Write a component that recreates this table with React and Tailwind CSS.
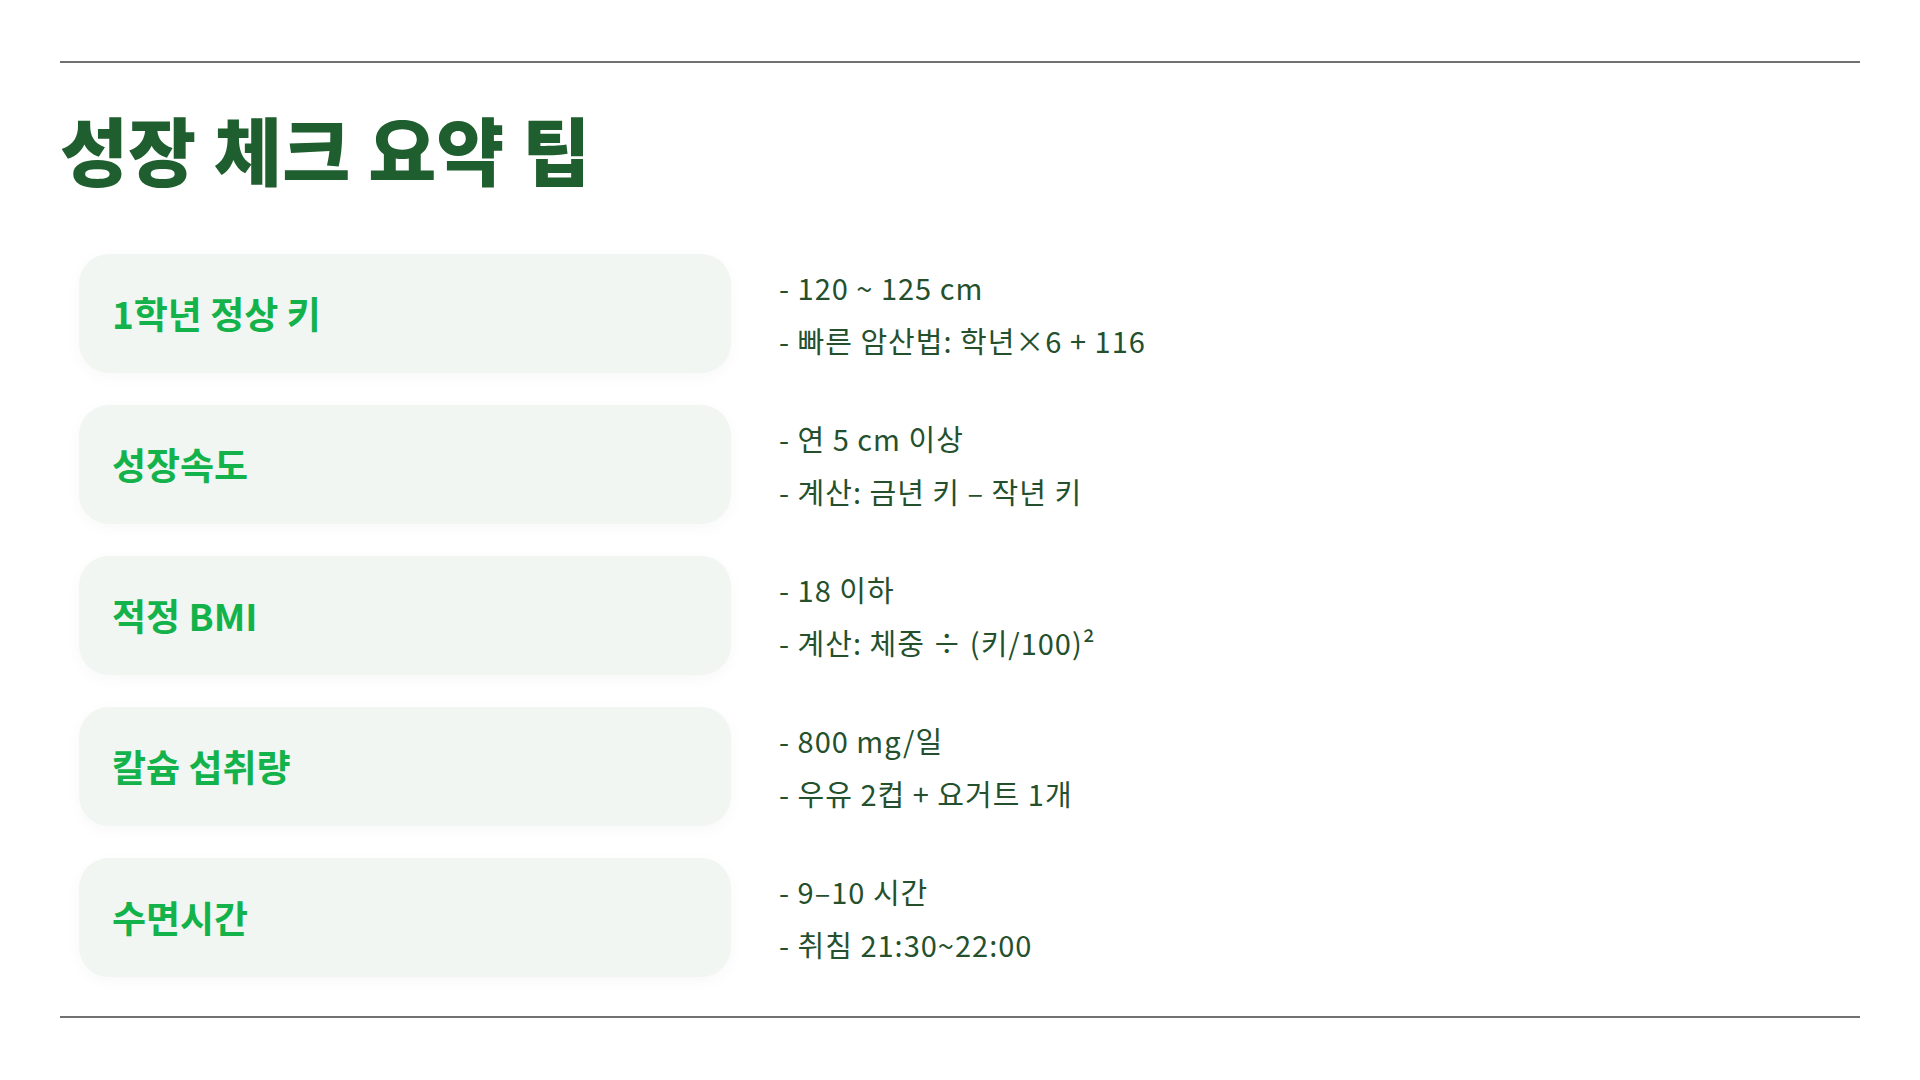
import React from "react";

// --- SUMMARY DATA ---
const TIPS = [
  { label: "1학년 정상 키", lines: ["- 120 ~ 125 cm", "- 빠른 암산법: 학년×6 + 116"] },
  { label: "성장속도", lines: ["- 연 5 cm 이상", "- 계산: 금년 키 – 작년 키"] },
  { label: "적정 BMI", lines: ["- 18 이하", "- 계산: 체중 ÷ (키/100)²"] },
  { label: "칼슘 섭취량", lines: ["- 800 mg/일", "- 우유 2컵 + 요거트 1개"] },
  { label: "수면시간", lines: ["- 9–10 시간", "- 취침 21:30~22:00"] },
];

const FONT = "font-['Noto_Sans_CJK_KR','Noto_Sans',sans-serif]";

function TipRow({ label, lines }) {
  return (
    <div className="flex items-center">
      {/* Label card */}
      <div className="ml-[19px] w-[652px] h-[119px] rounded-[30px] bg-[#f1f6f2] shadow-[0_4px_16px_rgba(0,0,0,0.03)] flex items-center pl-[33px]">
        <span className="text-[37px] font-bold leading-none text-[#13b24a]">
          {label}
        </span>
      </div>

      {/* Detail lines */}
      <div className="ml-[48px] flex flex-col gap-[15px] text-[29px] leading-[38px] tracking-[1px] text-[#24502e]">
        {lines.map((line) => (
          <span key={line}>{line}</span>
        ))}
      </div>
    </div>
  );
}

export default function App() {
  return (
    <div className={`w-full h-[1080px] bg-white flex flex-col px-[60px] pt-[61px] ${FONT}`}>
      {/* Top rule */}
      <div className="h-[2px] bg-[#717171]" />

      {/* Title */}
      <h1 className="mt-[48px] text-[74px] font-black leading-none text-[#1f5e2e] [word-spacing:1px]">
        성장 체크 요약 팁
      </h1>

      {/* Tip list */}
      <div className="mt-[69px] flex flex-col gap-[32px]">
        {TIPS.map((tip) => (
          <TipRow key={tip.label} {...tip} />
        ))}
      </div>

      {/* Bottom rule */}
      <div className="mt-[39px] h-[2px] bg-[#717171]" />
    </div>
  );
}
